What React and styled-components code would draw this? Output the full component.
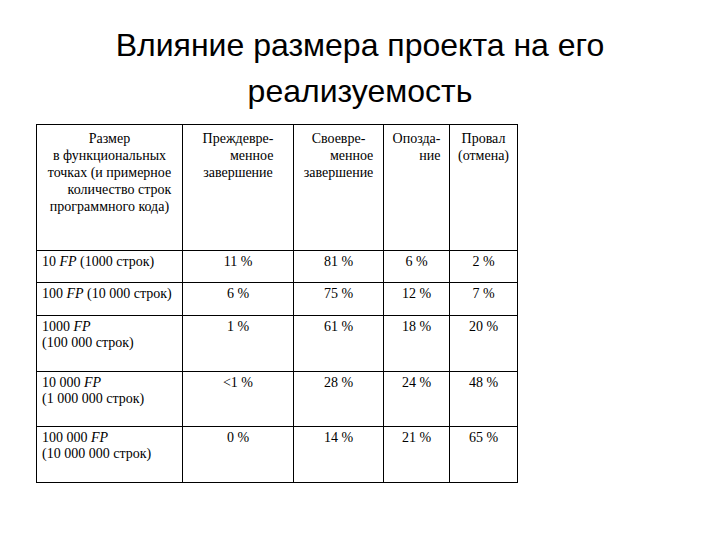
import React from 'react';
import styled, { createGlobalStyle } from 'styled-components';

// Slide: "Влияние размера проекта на его реализуемость"

const GlobalStyle = createGlobalStyle`
  html, body {
    margin: 0;
    padding: 0;
    background: #ffffff;
  }
`;

const Slide = styled.div`
  width: 720px;
  height: 540px;
  background: #ffffff;
  overflow: hidden;
  box-sizing: border-box;
  padding-top: 22px;
`;

const Title = styled.h1`
  margin: 0;
  font-family: 'Liberation Sans', Arial, sans-serif;
  font-weight: normal;
  font-size: 32px;
  line-height: 46px;
  color: #000000;
  text-align: center;
`;

const Table = styled.table`
  margin: 10px 0 0 36px;
  width: 481px;
  border-collapse: collapse;
  table-layout: fixed;
  font-family: 'Liberation Serif', 'Times New Roman', serif;
  font-size: 14px;
  color: #000000;
`;

const Row = styled.tr`
  height: ${(p) => p.h}px;
`;

const HeadCell = styled.th`
  border: 1px solid #000000;
  padding: 5px 0 0;
  vertical-align: top;
  text-align: center;
  font-weight: normal;
  line-height: 17px;
`;

const HeadText = styled.div`
  display: inline-block;
  text-align: center;
`;

const Line = styled.span`
  display: block;
  text-align: ${(p) => p.align || 'center'};
  white-space: nowrap;
`;

const Cell = styled.td`
  border: 1px solid #000000;
  padding: 3px 5px 0;
  vertical-align: top;
  text-align: ${(p) => (p.left ? 'left' : 'center')};
  line-height: 16px;
  white-space: nowrap;
`;

const Fp = styled.i`
  font-style: italic;
`;

const columns = [146, 111, 90, 66, 68];

const headers = [
  [
    ['Размер'],
    ['в функциональных'],
    ['точках (и примерное'],
    ['количество строк', 'right'],
    ['программного кода)'],
  ],
  [['Преждевре-'], ['менное', 'right'], ['завершение']],
  [['Своевре-'], ['менное', 'right'], ['завершение']],
  [['Опозда-'], ['ние', 'right']],
  [['Провал'], ['(отмена)']],
];

const rows = [
  { size: '10', lines: '(1000 строк)', inline: true, h: 32, values: ['11 %', '81 %', '6 %', '2 %'] },
  { size: '100', lines: '(10 000 строк)', inline: true, h: 33, values: ['6 %', '75 %', '12 %', '7 %'] },
  { size: '1000', lines: '(100 000 строк)', h: 56, values: ['1 %', '61 %', '18 %', '20 %'] },
  { size: '10 000', lines: '(1 000 000 строк)', h: 55, values: ['<1 %', '28 %', '24 %', '48 %'] },
  { size: '100 000', lines: '(10 000 000 строк)', h: 56, values: ['0 %', '14 %', '21 %', '65 %'] },
];

export default function App() {
  return (
    <>
      <GlobalStyle />
      <Slide>
        <Title>
          Влияние размера проекта на его
          <br />
          реализуемость
        </Title>
        <Table>
          <colgroup>
            {columns.map((w, i) => (
              <col key={i} style={{ width: w }} />
            ))}
          </colgroup>
          <thead>
            <Row h={126}>
              {headers.map((lines, i) => (
                <HeadCell key={i}>
                  <HeadText>
                    {lines.map(([text, align]) => (
                      <Line key={text} align={align}>
                        {text}
                      </Line>
                    ))}
                  </HeadText>
                </HeadCell>
              ))}
            </Row>
          </thead>
          <tbody>
            {rows.map((r) => (
              <Row key={r.size} h={r.h}>
                <Cell left>
                  {r.size} <Fp>FP</Fp>
                  {r.inline ? ' ' : <br />}
                  {r.lines}
                </Cell>
                {r.values.map((v, i) => (
                  <Cell key={i}>{v}</Cell>
                ))}
              </Row>
            ))}
          </tbody>
        </Table>
      </Slide>
    </>
  );
}
